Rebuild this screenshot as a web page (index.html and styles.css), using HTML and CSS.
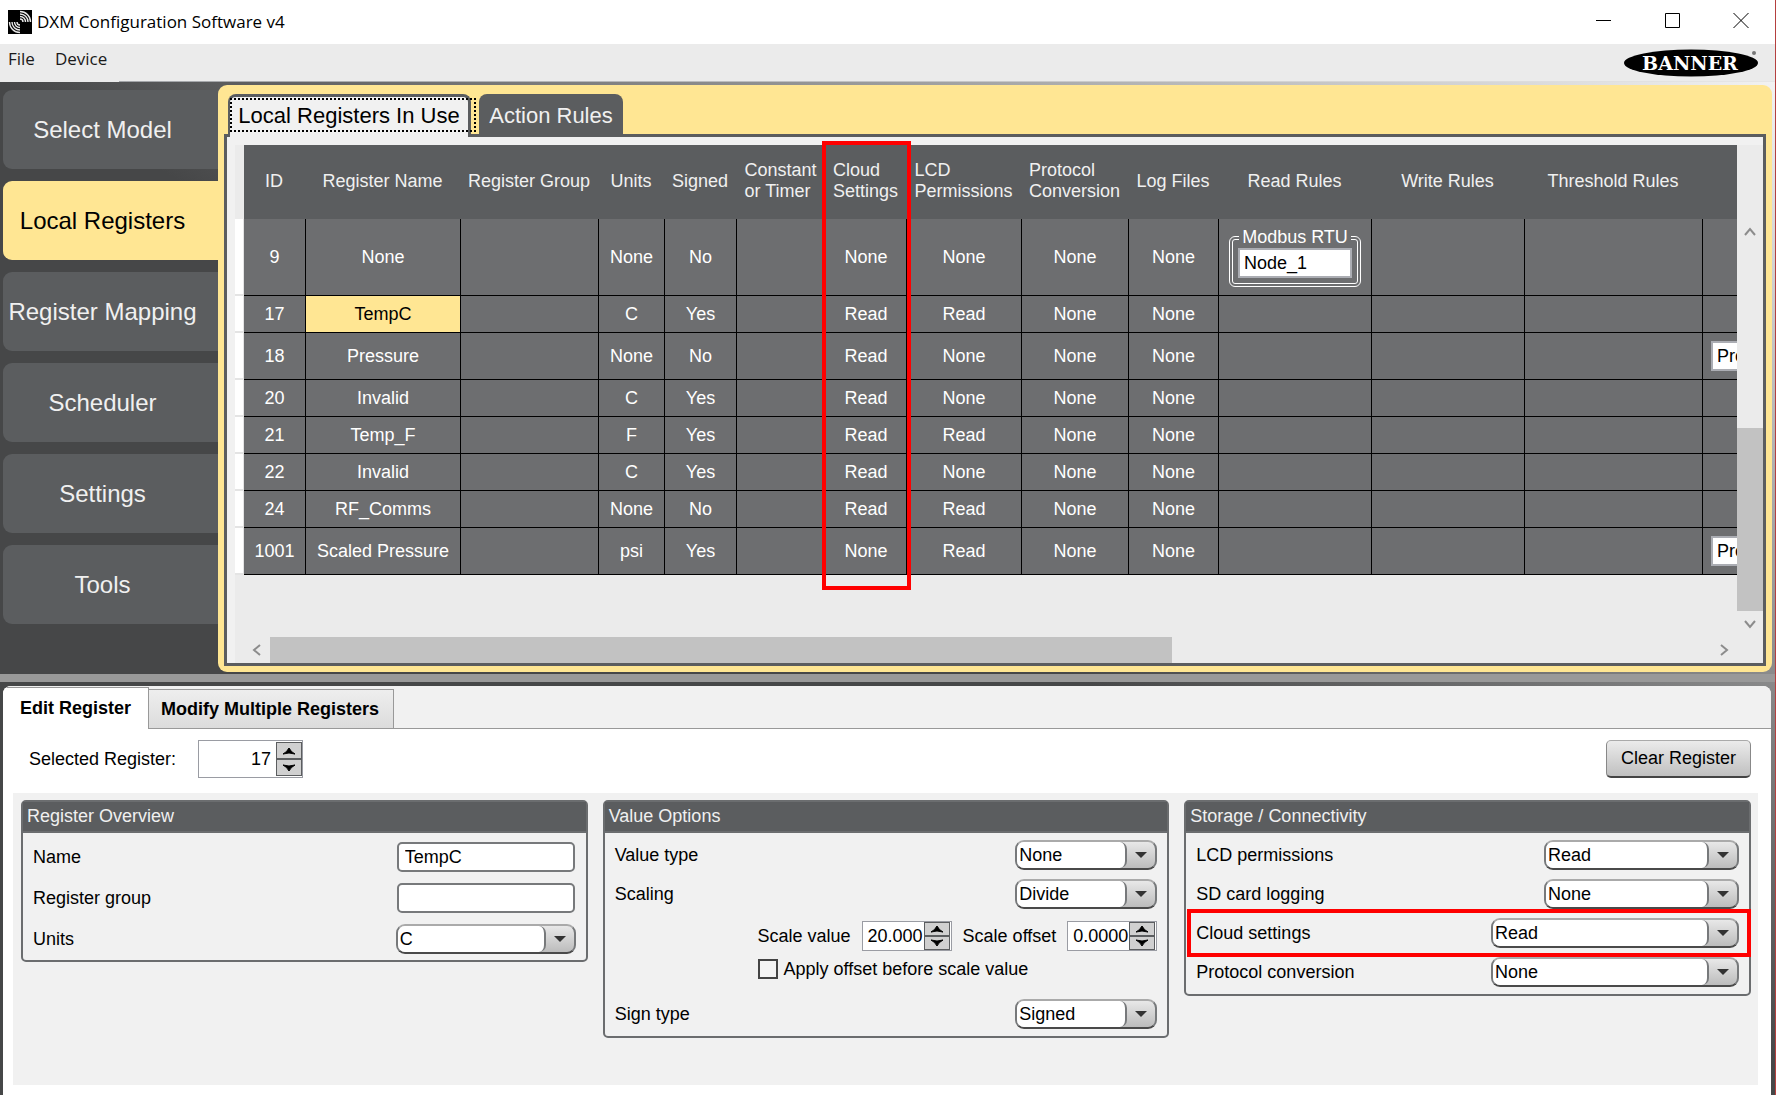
FILE: index.html
```html
<!DOCTYPE html>
<html lang="en">
<head>
<meta charset="utf-8">
<title>DXM Configuration Software v4</title>
<link rel="stylesheet" href="styles.css">
</head>
<body>
<div class="window">
  <header class="titlebar">
    <svg class="app-icon" viewBox="0 0 24 24" aria-hidden="true">
      <rect width="24" height="24" fill="#000"/>
      <g fill="none" stroke="#e8e8e8" stroke-width="1.400">
        <path d="M12 9a3 3 0 0 1 3 3M12 6.500a5.500 5.500 0 0 1 5.500 5.500M12 4a8 8 0 0 1 8 8M12 1.500a10.500 10.500 0 0 1 10.500 10.500"/>
        <path d="M12 15a3 3 0 0 1-3-3M12 17.500a5.500 5.500 0 0 1-5.500-5.500M12 20a8 8 0 0 1-8-8M12 22.500a10.500 10.500 0 0 1-10.500-10.500"/>
      </g>
    </svg>
    <h1 class="app-title">DXM Configuration Software v4</h1>
    <div class="window-controls">
      <button type="button" aria-label="Minimize"><svg viewBox="0 0 16 16"><path d="M0 8.500h15"/></svg></button>
      <button type="button" aria-label="Maximize"><svg viewBox="0 0 16 16"><path d="M.5 1.500h14v14h-14z"/></svg></button>
      <button type="button" aria-label="Close"><svg viewBox="0 0 16 16"><path d="M.5 1l15 15M15.500 1l-15 15"/></svg></button>
    </div>
  </header>

  <nav class="menubar">
    <a href="#file">File</a>
    <a href="#device">Device</a>
    <svg class="brand" viewBox="0 0 136 30" role="img" aria-label="Banner">
      <ellipse cx="68" cy="16" rx="67" ry="13.500" fill="#000"/>
      <text x="67" y="23" text-anchor="middle">BANNER</text>
      <circle cx="131" cy="6" r="2" fill="#777"/>
    </svg>
  </nav>

  <div class="desk">
    <div class="workspace">
      <nav class="sidebar">
        <button type="button">Select Model</button>
        <button type="button" class="current">Local Registers</button>
        <button type="button">Register Mapping</button>
        <button type="button">Scheduler</button>
        <button type="button">Settings</button>
        <button type="button">Tools</button>
      </nav>

      <main class="stage">
        <div class="stage-tabs">
          <button type="button" class="stage-tab selected"><span>Local Registers In Use</span></button>
          <button type="button" class="stage-tab">Action Rules</button>
        </div>
        <section class="grid-frame">
          <div class="grid-main">
            <div class="grid-clip">
              <table class="registers">
                <colgroup>
                  <col class="w-handle"><col class="w-id"><col class="w-name"><col class="w-group"><col class="w-units"><col class="w-signed"><col class="w-const"><col class="w-cloud"><col class="w-lcd"><col class="w-proto"><col class="w-log"><col class="w-rule"><col class="w-rule"><col class="w-wide"><col class="w-wide">
                </colgroup>
                <thead>
                  <tr>
                    <td class="handle"></td>
                    <th>ID</th><th>Register Name</th><th>Register Group</th><th>Units</th><th>Signed</th>
                    <th><span>Constant<br>or Timer</span></th><th><span>Cloud<br>Settings</span></th><th><span>LCD<br>Permissions</span></th><th><span>Protocol<br>Conversion</span></th>
                    <th>Log Files</th><th>Read Rules</th><th>Write Rules</th><th>Threshold Rules</th><th></th>
                  </tr>
                </thead>
                <tbody>
                  <tr class="tallest"><td class="handle"></td><td>9</td><td>None</td><td></td><td>None</td><td>No</td><td></td><td>None</td><td>None</td><td>None</td><td>None</td>
                    <td><fieldset class="rule"><legend>Modbus RTU</legend><input type="text" value="Node_1" aria-label="Modbus RTU rule"></fieldset></td><td></td><td></td><td></td></tr>
                  <tr><td class="handle"></td><td>17</td><td class="picked">TempC</td><td></td><td>C</td><td>Yes</td><td></td><td>Read</td><td>Read</td><td>None</td><td>None</td><td></td><td></td><td></td><td></td></tr>
                  <tr class="tall"><td class="handle"></td><td>18</td><td>Pressure</td><td></td><td>None</td><td>No</td><td></td><td>Read</td><td>None</td><td>None</td><td>None</td><td></td><td></td><td></td><td class="entry"><input type="text" value="Pressure" aria-label="Rule for register 18"></td></tr>
                  <tr><td class="handle"></td><td>20</td><td>Invalid</td><td></td><td>C</td><td>Yes</td><td></td><td>Read</td><td>None</td><td>None</td><td>None</td><td></td><td></td><td></td><td></td></tr>
                  <tr><td class="handle"></td><td>21</td><td>Temp_F</td><td></td><td>F</td><td>Yes</td><td></td><td>Read</td><td>Read</td><td>None</td><td>None</td><td></td><td></td><td></td><td></td></tr>
                  <tr><td class="handle"></td><td>22</td><td>Invalid</td><td></td><td>C</td><td>Yes</td><td></td><td>Read</td><td>None</td><td>None</td><td>None</td><td></td><td></td><td></td><td></td></tr>
                  <tr><td class="handle"></td><td>24</td><td>RF_Comms</td><td></td><td>None</td><td>No</td><td></td><td>Read</td><td>Read</td><td>None</td><td>None</td><td></td><td></td><td></td><td></td></tr>
                  <tr class="tall"><td class="handle"></td><td>1001</td><td>Scaled Pressure</td><td></td><td>psi</td><td>Yes</td><td></td><td>None</td><td>Read</td><td>None</td><td>None</td><td></td><td></td><td></td><td class="entry"><input type="text" value="Pressure" aria-label="Rule for register 1001"></td></tr>
                </tbody>
              </table>
            </div>
            <div class="vscroll">
              <svg viewBox="0 0 12 10"><path d="M1 8l5-6 5 6"/></svg>
              <div class="vtrack"><div class="vthumb"></div></div>
              <svg viewBox="0 0 12 10"><path d="M1 2l5 6 5-6"/></svg>
            </div>
            <div class="mark mark-column"></div>
          </div>
          <div class="hscroll">
            <svg viewBox="0 0 10 12"><path d="M8 1L2 6l6 5"/></svg>
            <div class="htrack"><div class="hthumb"></div></div>
            <svg viewBox="0 0 10 12"><path d="M2 1l6 5-6 5"/></svg>
          </div>
        </section>
      </main>
    </div>

    <div class="splitter"></div>

    <section class="editor">
      <div class="editor-tabs">
        <button type="button" class="editor-tab selected">Edit Register</button>
        <button type="button" class="editor-tab">Modify Multiple Registers</button>
      </div>
      <div class="editor-body">
        <div class="picker">
          <label for="reg">Selected Register:</label>
          <span class="spin spin-large">
            <input id="reg" type="text" value="17">
            <span class="spin-buttons">
              <button type="button" aria-label="Increase"><svg viewBox="0 0 14 8"><path d="M1 7q4-2 6-6 2 4 6 6-6-2-12 0z"/></svg></button>
              <button type="button" aria-label="Decrease"><svg viewBox="0 0 14 8"><path d="M1 1q4 2 6 6 2-4 6-6-6 2-12 0z"/></svg></button>
            </span>
          </span>
          <button type="button" class="clear">Clear Register</button>
        </div>

        <div class="groups">
          <section class="group">
            <h2>Register Overview</h2>
            <div class="rows rows-loose">
              <div class="row"><label for="name">Name</label><input id="name" class="box" type="text" value="TempC"></div>
              <div class="row"><label for="group">Register group</label><input id="group" class="box" type="text" value=""></div>
              <div class="row"><label for="units">Units</label><span class="combo combo-units"><select id="units"><option>C</option></select></span></div>
            </div>
          </section>

          <section class="group">
            <h2>Value Options</h2>
            <div class="rows">
              <div class="row"><label for="vtype">Value type</label><span class="combo combo-short"><select id="vtype"><option>None</option></select></span></div>
              <div class="row"><label for="scaling">Scaling</label><span class="combo combo-short"><select id="scaling"><option>Divide</option></select></span></div>
              <div class="scale">
                <label for="sval">Scale value</label>
                <span class="spin">
                  <input id="sval" type="text" value="20.000">
                  <span class="spin-buttons">
                    <button type="button" aria-label="Increase"><svg viewBox="0 0 14 8"><path d="M1 7q4-2 6-6 2 4 6 6-6-2-12 0z"/></svg></button>
                    <button type="button" aria-label="Decrease"><svg viewBox="0 0 14 8"><path d="M1 1q4 2 6 6 2-4 6-6-6 2-12 0z"/></svg></button>
                  </span>
                </span>
                <label for="soff">Scale offset</label>
                <span class="spin">
                  <input id="soff" type="text" value="0.0000">
                  <span class="spin-buttons">
                    <button type="button" aria-label="Increase"><svg viewBox="0 0 14 8"><path d="M1 7q4-2 6-6 2 4 6 6-6-2-12 0z"/></svg></button>
                    <button type="button" aria-label="Decrease"><svg viewBox="0 0 14 8"><path d="M1 1q4 2 6 6 2-4 6-6-6 2-12 0z"/></svg></button>
                  </span>
                </span>
                <span class="check"><input type="checkbox" id="apply"><label for="apply">Apply offset before scale value</label></span>
              </div>
              <div class="row"><label for="sign">Sign type</label><span class="combo combo-short"><select id="sign"><option>Signed</option></select></span></div>
            </div>
          </section>

          <section class="group">
            <h2>Storage / Connectivity</h2>
            <div class="rows">
              <div class="row"><label for="lcd">LCD permissions</label><span class="combo combo-medium"><select id="lcd"><option>Read</option></select></span></div>
              <div class="row"><label for="sd">SD card logging</label><span class="combo combo-medium"><select id="sd"><option>None</option></select></span></div>
              <div class="row"><label for="cloud">Cloud settings</label><span class="combo combo-long"><select id="cloud"><option>Read</option></select></span><div class="mark mark-row"></div></div>
              <div class="row"><label for="proto">Protocol conversion</label><span class="combo combo-long"><select id="proto"><option>None</option></select></span></div>
            </div>
          </section>
        </div>
      </div>
    </section>
  </div>
</div>
</body>
</html>
```
FILE: styles.css
```css
* { box-sizing: border-box; }

body {
  margin: 0;
  font: 18px/21px "Liberation Sans", Arial, sans-serif;
  color: #000;
}

button, input, select { font: inherit; color: inherit; margin: 0; }
button { padding: 0; border: 0; background: none; }

.window {
  display: flex;
  flex-direction: column;
  min-height: 100vh;
  border-right: 1px solid #b5403f;
  background: #fff;
}

/* Title bar */
.titlebar {
  display: flex;
  align-items: center;
  height: 44px;
  padding: 0 18px 0 8px;
}
.app-icon { width: 24px; height: 24px; }
.app-title {
  margin: 0 0 0 5px;
  font: 17px/24px "Open Sans", "Noto Sans", sans-serif;
}
.window-controls { display: flex; margin-left: auto; }
.window-controls button { width: 69px; height: 43px; }
.window-controls button:last-child { width: 50px; padding-left: 17px; }
.window-controls svg { width: 16px; height: 16px; fill: none; stroke: #000; }

/* Menu bar */
.menubar {
  display: flex;
  align-items: flex-start;
  gap: 20px;
  height: 38px;
  padding: 3px 16px 0 8px;
  background: linear-gradient(90deg, #a3a5a8, #ebebeb) 119px bottom / 100% 1px no-repeat #ebebeb;
}
.menubar a {
  font: 17px/24px "Open Sans", "Noto Sans", sans-serif;
  color: #1a1a1a;
  text-decoration: none;
}
.brand { width: 136px; height: 30px; margin-left: auto; }
.brand text { font: bold 19px "DejaVu Serif", serif; fill: #fff; }

.desk {
  flex: 1;
  display: flex;
  flex-direction: column;
  background: linear-gradient(209deg, #f2f2f2 0, #464748 860px);
}

/* Upper workspace */
.workspace { display: flex; padding: 3px 3px 2px; }
.sidebar {
  width: 215px;
  display: flex;
  flex-direction: column;
  gap: 12px;
  padding-top: 5px;
}
.sidebar button {
  height: 79px;
  padding-right: 16px;
  border-radius: 9px 0 0 9px;
  background: #5b5d5f;
  color: #f0f0f0;
  font-size: 24px;
}
.sidebar .current { background: #ffe693; color: #000; }

.stage {
  flex: 1;
  min-width: 0;
  padding: 9px 6px 6px;
  border-radius: 9px;
  background: #ffe693;
}
.stage-tabs {
  display: flex;
  align-items: flex-start;
  gap: 8px;
  padding-left: 4px;
}
.stage-tab {
  width: 144px;
  height: 40px;
  padding: 2px 0 0;
  border-radius: 8px 8px 0 0;
  background: #5b5d5f;
  color: #f0f0f0;
  font-size: 22px;
}
.stage-tab.selected {
  position: relative;
  z-index: 1;
  width: 243px;
  height: 43px;
  margin-bottom: -3px;
  padding: 0 0 4px;
  border: solid #5b5d5f;
  border-width: 3px 3px 0 2px;
  background: #f1f1f1;
  color: #000;
}
.stage-tab.selected span {
  display: block;
  margin-right: -8px;
  padding: 5px 12px 4px 4px;
  border: 2px dotted #000;
}

.grid-frame {
  padding: 8px 0 0 8px;
  border: 3px solid #5b5d5f;
  background: #f1f1f1;
}
.grid-main {
  position: relative;
  display: flex;
  background: #ebebeb;
}
.grid-clip { flex: 1; min-width: 0; overflow: hidden; padding-bottom: 62px; }

.registers {
  width: 1551px;
  table-layout: fixed;
  border-collapse: separate;
  border-spacing: 0;
  color: #fff;
  text-align: center;
}
.w-handle { width: 9px; }
.w-id { width: 62px; }
.w-name { width: 155px; }
.w-group { width: 138px; }
.w-units { width: 66px; }
.w-signed { width: 72px; }
.w-const { width: 89px; }
.w-cloud { width: 81px; }
.w-lcd { width: 115px; }
.w-proto { width: 107px; }
.w-log { width: 90px; }
.w-rule { width: 153px; }
.w-wide { width: 178px; }

.registers th, .registers td { padding: 0; }
.registers th {
  height: 74px;
  padding: 0 2px 2px 0;
  background: #5b5d5f;
  color: #f0f0f0;
  font-weight: normal;
}
.registers th span { display: inline-block; text-align: left; }
.registers tbody td {
  height: 37px;
  border: solid #000;
  border-width: 0 1px 1px 0;
  background: #6d6e70;
}
.registers .tall td { height: 47px; }
.registers .tallest td { height: 77px; }
.registers tbody .picked { background: #ffe693; color: #000; }
.registers tbody .handle {
  border: solid #e4e4e4;
  border-width: 0 1px 2px 0;
  background: #fff;
}
.registers input {
  display: block;
  height: 30px;
  padding: 0 4px;
  border: 2px solid #abadb3;
  border-radius: 0;
  background: #fff;
  color: #000;
}
.registers .entry input { width: 150px; margin-left: 8px; }
.rule {
  width: 132px;
  margin: 0 auto;
  padding: 0 5px 5px;
  border: 4px double #fff;
  border-radius: 6px;
}
.rule legend { padding: 0 3px; }
.rule input { width: 100%; }

/* Scroll bars */
.vscroll, .hscroll { display: flex; align-items: center; }
.vscroll { flex-direction: column; width: 26px; padding-top: 82px; padding-bottom: 8px; }
.vscroll svg, .hscroll svg { flex: none; fill: none; stroke: #8c8c8c; stroke-width: 2; }
.vscroll svg { width: 12px; height: 10px; }
.hscroll svg { width: 10px; height: 12px; }
.vtrack { flex: 1; align-self: stretch; display: flex; align-items: flex-end; padding-bottom: 8px; }
.vthumb { width: 100%; height: 49%; background: #c2c2c2; }
.hscroll { height: 26px; padding: 0 34px 0 17px; gap: 8px; background: #ebebeb; }
.htrack { flex: 1; align-self: stretch; }
.hthumb { width: 62.6%; height: 100%; background: #c2c2c2; }

/* Red call-outs laid over the content */
.mark { position: absolute; border: 4px solid #f00; pointer-events: none; }
.mark-column { left: 587px; top: -4px; width: 89px; height: 449px; }
.mark-row { inset: -9px -12px -9px -9px; }

.splitter { height: 8px; margin-bottom: 4px; background: #999; }

/* Editor */
.editor {
  flex: 1;
  display: flex;
  flex-direction: column;
  margin: 0 4px 0 3px;
  border-radius: 8px 8px 0 0;
  background: #fff;
  overflow: hidden;
}
.editor-tabs {
  display: flex;
  align-items: flex-end;
  height: 43px;
  border-bottom: 1px solid #999;
  background: #f1f1f1;
}
.editor-tab {
  height: 39px;
  padding: 0 14px 0 12px;
  border: solid #999;
  border-width: 1px 1px 0 0;
  background: linear-gradient(#eee, #dcdcdc);
  font-weight: bold;
}
.editor-tab.selected {
  height: 42px;
  margin-bottom: -1px;
  padding: 0 17px;
  background: #fff;
}
.editor-body { flex: 1; padding: 11px 13px 11px 10px; }

.picker { display: flex; align-items: center; padding: 0 7px 0 16px; margin-bottom: 15px; }
.picker label { width: 169px; }
.clear {
  width: 145px;
  height: 38px;
  margin-left: auto;
  border: solid #999;
  border-width: 1px 1px 2px;
  border-color: #aaa #888 #444;
  border-radius: 5px;
  background: linear-gradient(#ebebeb, #c0c0c0);
}

.spin {
  display: flex;
  width: 90px;
  height: 30px;
  padding-right: 1px;
  border: 1px solid #9a9ca3;
  background: #fff;
}
.spin input {
  flex: 1;
  min-width: 0;
  padding: 0 1px 0 0;
  border: 0;
  background: none;
  text-align: right;
}
.spin-buttons { width: 26px; display: flex; flex-direction: column; }
.spin-buttons button {
  flex: 1;
  display: grid;
  place-items: center;
  min-height: 0;
  border: 1px solid #5b5d5f;
  background: #d0d0d0;
}
.spin-buttons svg { width: 14px; height: 8px; stroke: #000; stroke-linejoin: round; }
.spin-large { width: 105px; height: 38px; padding: 1px 0 1px 1px; }
.spin-large input { padding-right: 5px; }

.groups {
  display: grid;
  grid-template-columns: repeat(3, 1fr);
  align-items: start;
  gap: 15px;
  min-height: 292px;
  padding: 7px 7px 7px 8px;
  background: #f1f1f1;
}
.group { border: 2px solid #6b6d6f; border-radius: 5px; }
.group h2 {
  height: 31px;
  margin: 0;
  padding: 4px;
  border-bottom: 2px solid #6b6d6f;
  background: #5b5d5f;
  color: #f0f0f0;
  font-size: 18px;
  font-weight: normal;
}
.rows { display: flex; flex-direction: column; gap: 9px; padding: 7px 10px; }
.rows-loose { gap: 11px; padding: 9px 10px 6px; }
.row {
  position: relative;
  display: flex;
  align-items: center;
  justify-content: space-between;
  height: 30px;
}
.box {
  width: 178px;
  height: 30px;
  margin-right: 1px;
  padding: 0 6px;
  border: 2px solid #77797b;
  border-radius: 5px;
  background: #fff;
}

.combo {
  display: grid;
  grid-template-columns: 1fr 28px;
  height: 30px;
  border: solid #77797b;
  border-width: 2px;
  border-color: #aaa #77797b #4a4a4a;
  border-radius: 9px;
  background: linear-gradient(#e8e8e8, #bcbcbc);
  overflow: hidden;
}
.combo::before {
  content: "";
  grid-area: 1 / 1;
  border-right: 2px solid #77797b;
  border-radius: 0 7px 7px 0;
  background: #fff;
}
.combo::after {
  content: "";
  grid-area: 1 / 2;
  place-self: center;
  border: solid transparent;
  border-width: 6px 6px 0;
  border-top-color: #333;
}
.combo select {
  grid-area: 1 / 1 / 2 / 3;
  z-index: 1;
  min-width: 0;
  padding: 0 2px;
  border: 0;
  background: none;
  appearance: none;
}
.combo-units { width: 180px; }
.combo-short { width: 142px; }
.combo-medium { width: 195px; }
.combo-long { width: 248px; }

.scale {
  display: grid;
  grid-template-columns: auto 90px auto 90px;
  justify-content: end;
  align-items: center;
  gap: 8px 11px;
  padding: 3px 0 11px;
}
.check { grid-column: 1 / 5; display: flex; align-items: center; gap: 6px; height: 20px; }
.check input {
  width: 20px;
  height: 20px;
  border: 2px solid #444;
  border-radius: 0;
  background: #f4f4f4;
  appearance: none;
}
```
